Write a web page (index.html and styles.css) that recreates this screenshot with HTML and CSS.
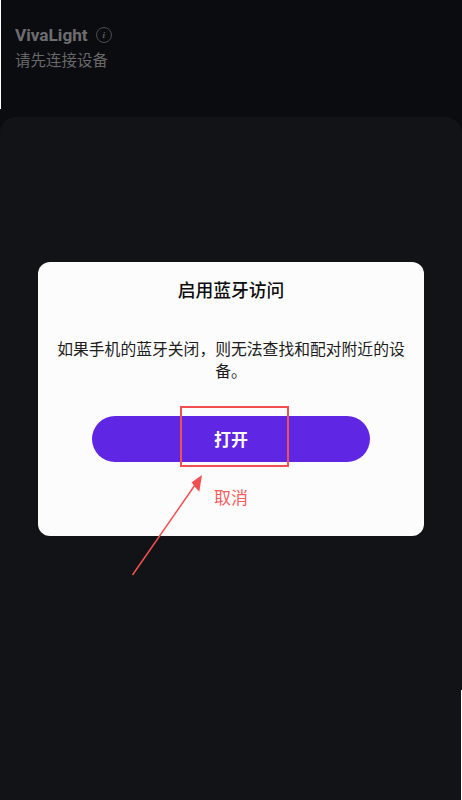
FILE: index.html
```html
<!DOCTYPE html>
<html lang="zh">
<head>
<meta charset="utf-8">
<title>VivaLight</title>
<link rel="stylesheet" href="styles.css">
</head>
<body>
<div class="screen">
  <header class="header">
    <div class="title-row">
      <span class="title">VivaLight</span>
      <span class="info">i</span>
    </div>
    <div class="subtitle">请先连接设备</div>
  </header>
  <main class="sheet">
    <section class="dialog">
      <h1 class="dialog-title">启用蓝牙访问</h1>
      <p class="dialog-text">如果手机的蓝牙关闭，则无法查找和配对附近的设备。</p>
      <button class="primary">打开</button>
      <button class="cancel">取消</button>
    </section>
  </main>
  <span class="edge edge-left"></span>
  <span class="edge edge-right"></span>
  <span class="mark-box"></span>
  <svg class="mark-arrow" width="80" height="110" viewBox="0 0 80 110">
    <line x1="3.5" y1="105" x2="66" y2="15" stroke="#f25050" stroke-width="1.5"/>
    <path d="M73 5 L70.3 21.7 L65.5 16.5 L62.7 12.3 Z" fill="#f25050"/>
  </svg>
</div>
</body>
</html>
```
FILE: styles.css
```css
* { box-sizing: border-box; }
html, body { margin: 0; padding: 0; }
body { background: #0b0c10; font-family: Roboto, "Noto Sans CJK SC", sans-serif; }
.screen { position: relative; width: 462px; height: 800px; overflow: hidden; display: flex; flex-direction: column; background: #0b0c10; }
.header { height: 117px; flex: none; padding: 25px 15px 0; }
.title-row { display: flex; align-items: center; gap: 8px; height: 20px; }
.title { font-size: 17.2px; font-weight: 700; color: #6e6e70; line-height: 20px; }
.info { width: 16px; height: 16px; border: 1px solid #4c4c4f; border-radius: 50%; color: #626264; font: italic 700 9px/14px "Liberation Serif", serif; text-align: center; }
.subtitle { margin-top: 4px; font: 400 15.5px/20px "Noto Sans CJK SC", sans-serif; color: #686869; }
.sheet { flex: 1; background: #121317; border-radius: 16px 16px 0 0; padding: 145px 38px 0; }
.dialog { width: 386px; height: 274px; background: #fcfcfd; border-radius: 12px; display: flex; flex-direction: column; align-items: center; padding: 16px 20px 0; }
.dialog-title { margin: 0; font: 500 17.8px/22px "Noto Sans CJK SC", sans-serif; color: #0c0c0c; }
.dialog-text { margin: 38px 0 0; width: 352px; font: 400 15.8px/22px "Noto Sans CJK SC", sans-serif; color: #1c1c1c; text-align: center; }
.primary { margin-top: 34px; width: 278px; height: 46px; flex: none; border: 0; border-radius: 23px; background: #5f26e3; color: #fff; font: 700 17px/24px "Noto Sans CJK SC", sans-serif; }
.cancel { margin-top: 23px; padding: 0; border: 0; background: none; color: #f65d5d; font: 400 17px/24px "Noto Sans CJK SC", sans-serif; }
.edge { position: absolute; width: 1px; background: #fff; }
.edge-left { left: 0; top: 0; height: 109px; }
.edge-right { right: 0; top: 690px; height: 110px; }
.mark-box { position: absolute; left: 180px; top: 406px; width: 109px; height: 61px; border: 2px solid #f25050; }
.mark-arrow { position: absolute; left: 129px; top: 470px; }
```
